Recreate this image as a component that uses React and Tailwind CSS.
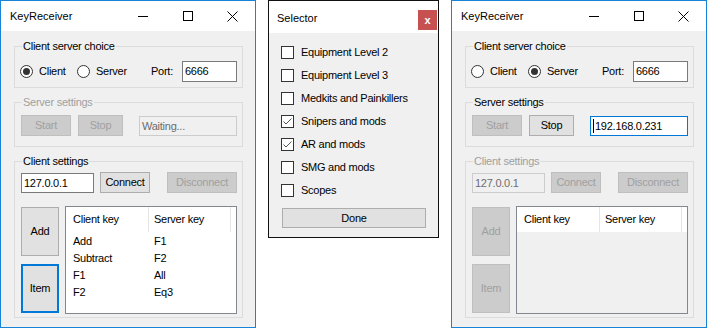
const font = "font-['Liberation_Sans',Arial,sans-serif]";
const body = "text-[11px] tracking-[-0.25px]";

const btnStyles = {
  normal: "border border-[#adadad] bg-[#e1e1e1] text-black",
  disabled: "border border-[#bfbfbf] bg-[#cccccc] text-[#a0a0a0]",
  focused: "border-2 border-[#0078d7] bg-[#e1e1e1] text-black",
};

const boxStyles = {
  normal: "border border-[#7a7a7a] bg-white text-black",
  disabled: "border border-[#cccccc] bg-[#f0f0f0] text-[#6d6d6d]",
  focused: "border border-[#0078d7] bg-white text-black",
};

const Button = ({ kind = "normal", className = "", children }) => (
  <div
    className={`flex shrink-0 items-center justify-center leading-[13px] ${btnStyles[kind]} ${className}`}
  >
    {children}
  </div>
);

const TextBox = ({ kind = "normal", caret, className = "", children }) => (
  <div
    className={`flex shrink-0 items-center pl-[2px] leading-[13px] ${boxStyles[kind]} ${className}`}
  >
    {caret && <span className="mr-[1px] h-[14px] w-[1px] bg-black" />}
    {children}
  </div>
);

const Radio = ({ checked, label, className = "" }) => (
  <div className={`flex shrink-0 items-center ${className}`}>
    <span className="flex h-[13px] w-[13px] items-center justify-center rounded-full border border-[#333333] bg-white">
      {checked && <span className="h-[7px] w-[7px] rounded-full bg-[#333333]" />}
    </span>
    <span className="ml-[6px] leading-[13px]">{label}</span>
  </div>
);

const GroupBox = ({ label, disabled, className = "", children }) => (
  <div className={`border border-[#dcdcdc] ${className}`}>
    <div
      className={`-mt-[7px] ml-[7px] w-fit bg-[#f0f0f0] px-[1px] leading-[13px] ${
        disabled ? "text-[#a0a0a0]" : "text-black"
      }`}
    >
      {label}
    </div>
    {children}
  </div>
);

const CaptionButtons = () => (
  <div className="ml-auto flex">
    <div className="flex h-[30px] w-[45px] items-center justify-center">
      <svg width="10" height="10" viewBox="0 0 10 10">
        <line x1="0" y1="5.5" x2="10" y2="5.5" stroke="#000" strokeWidth="1" />
      </svg>
    </div>
    <div className="flex h-[30px] w-[45px] items-center justify-center">
      <svg width="10" height="10" viewBox="0 0 10 10">
        <rect x="0.5" y="0.5" width="9" height="9" fill="none" stroke="#000" strokeWidth="1" />
      </svg>
    </div>
    <div className="flex h-[30px] w-[45px] items-center justify-center">
      <svg width="11" height="11" viewBox="0 0 11 11">
        <path d="M0.5 0.5L10.5 10.5M10.5 0.5L0.5 10.5" stroke="#000" strokeWidth="1" />
      </svg>
    </div>
  </div>
);

const keyRows = [
  ["Add", "F1"],
  ["Subtract", "F2"],
  ["F1", "All"],
  ["F2", "Eq3"],
];

// mode: "client" | "server"
const KeyReceiver = ({ mode }) => {
  const isServer = mode === "server";

  return (
    <div className="flex h-[328px] w-[256px] shrink-0 flex-col border border-[#1883d7] bg-[#f0f0f0]">
      {/* ── title bar ─────────────────────────────── */}
      <div className="flex h-[30px] items-center bg-white pl-[9px] text-[11px] text-black">
        <span>KeyReceiver</span>
        <CaptionButtons />
      </div>

      <div className={`ml-[13px] mt-[15px] w-[229px] ${body}`}>
        {/* ── client server choice ──────────────── */}
        <GroupBox label="Client server choice" className="h-[42px]">
          <div className="mt-[8px] flex h-[21px] items-center pl-[5px]">
            <Radio checked={!isServer} label="Client" className="w-[57px]" />
            <Radio checked={isServer} label="Server" className="w-[74px]" />
            <span className="w-[31px] leading-[13px]">Port:</span>
            <TextBox className="h-[21px] w-[55px]">6666</TextBox>
          </div>
        </GroupBox>

        {/* ── server settings ───────────────────── */}
        <GroupBox label="Server settings" disabled={!isServer} className="mt-[14px] h-[45px]">
          <div className="mt-[6px] flex items-start pl-[6px]">
            <Button kind="disabled" className="h-[21px] w-[50px]">
              Start
            </Button>
            <Button kind={isServer ? "normal" : "disabled"} className="ml-[7px] h-[21px] w-[45px]">
              Stop
            </Button>
            {isServer ? (
              <TextBox kind="focused" caret className="ml-[16px] mt-[1px] h-[20px] w-[98px]">
                192.168.0.231
              </TextBox>
            ) : (
              <TextBox kind="disabled" className="ml-[16px] mt-[1px] h-[20px] w-[98px]">
                Waiting...
              </TextBox>
            )}
          </div>
        </GroupBox>

        {/* ── client settings ───────────────────── */}
        <GroupBox label="Client settings" disabled={isServer} className="mt-[14px] h-[157px]">
          <div className="mt-[4px] flex items-start pl-[6px]">
            <TextBox kind={isServer ? "disabled" : "normal"} className="mt-[1px] h-[20px] w-[73px]">
              127.0.0.1
            </TextBox>
            <Button kind={isServer ? "disabled" : "normal"} className="ml-[6px] h-[21px] w-[50px]">
              Connect
            </Button>
            <Button kind="disabled" className="ml-[17px] h-[21px] w-[70px]">
              Disconnect
            </Button>
          </div>

          <div className="mt-[13px] flex items-start pl-[6px]">
            <div className="mt-[1px] flex flex-col gap-[8px]">
              <Button kind={isServer ? "disabled" : "normal"} className="h-[49px] w-[38px]">
                Add
              </Button>
              <Button kind={isServer ? "disabled" : "focused"} className="h-[49px] w-[38px]">
                Item
              </Button>
            </div>

            {/* list view */}
            <div
              className={`ml-[6px] flex h-[108px] w-[172px] flex-col border border-[#828790] ${
                isServer ? "bg-[#f0f0f0]" : "bg-white"
              }`}
            >
              <div className="flex h-[25px] shrink-0 bg-white">
                <div className="flex w-[82px] items-center pl-[7px]">Client key</div>
                <div className="flex w-[82px] items-center border-l border-[#e5e5e5] pl-[5px]">
                  Server key
                </div>
                <div className="border-l border-[#e5e5e5]" />
              </div>
              {!isServer && (
                <div className="mt-[1px]">
                  {keyRows.map(([c, s]) => (
                    <div key={c} className="flex h-[17px] items-center">
                      <span className="w-[82px] pl-[7px]">{c}</span>
                      <span className="pl-[6px]">{s}</span>
                    </div>
                  ))}
                </div>
              )}
            </div>
          </div>
        </GroupBox>
      </div>
    </div>
  );
};

const options = [
  ["Equipment Level 2", false],
  ["Equipment Level 3", false],
  ["Medkits and Painkillers", false],
  ["Snipers and mods", true],
  ["AR and mods", true],
  ["SMG and mods", false],
  ["Scopes", false],
];

const Selector = () => (
  <div className="flex h-[238px] w-[171px] shrink-0 flex-col border border-[#111111] bg-[#f0f0f0]">
    <div className="flex h-[32px] items-start bg-white">
      <span className="ml-[8px] mt-[11px] text-[11px] leading-[13px] text-black">Selector</span>
      <div className="ml-auto mr-[1px] mt-[9px] flex h-[20px] w-[19px] items-center justify-center bg-[#c75050] text-[11px] font-bold leading-none text-white">
        x
      </div>
    </div>

    <div className={`pl-[12px] pt-[8px] ${body}`}>
      {options.map(([label, checked]) => (
        <div key={label} className="flex h-[23px] items-center">
          <span className="flex h-[13px] w-[13px] items-center justify-center border border-[#333333] bg-white">
            {checked && (
              <svg width="11" height="11" viewBox="0 0 11 11">
                <polyline points="1.5,5.5 4,8 9.5,2.5" fill="none" stroke="#555" strokeWidth="1" />
              </svg>
            )}
          </span>
          <span className="ml-[7px] leading-[13px]">{label}</span>
        </div>
      ))}
      <Button className="ml-[1px] mt-[6px] h-[20px] w-[144px]">Done</Button>
    </div>
  </div>
);

const App = () => (
  <div className={`flex h-[328px] w-[708px] items-start gap-[12px] bg-white ${font}`}>
    <KeyReceiver mode="client" />
    <Selector />
    <KeyReceiver mode="server" />
  </div>
);

export default App;
